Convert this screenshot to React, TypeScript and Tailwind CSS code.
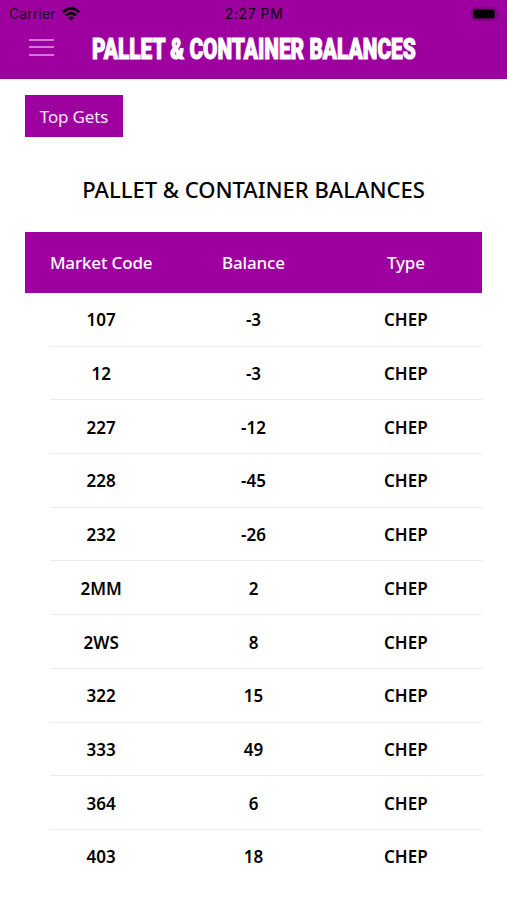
const rows: [string, string, string][] = [
  ["107", "-3", "CHEP"],
  ["12", "-3", "CHEP"],
  ["227", "-12", "CHEP"],
  ["228", "-45", "CHEP"],
  ["232", "-26", "CHEP"],
  ["2MM", "2", "CHEP"],
  ["2WS", "8", "CHEP"],
  ["322", "15", "CHEP"],
  ["333", "49", "CHEP"],
  ["364", "6", "CHEP"],
  ["403", "18", "CHEP"],
];

function WifiIcon() {
  return (
    <svg className="h-[14px] w-[18px]" viewBox="0 0 18 14" fill="none" stroke="#000" strokeWidth="2.6">
      <path d="M1 5.2Q9-2.3 17 5.2" />
      <path d="M4.1 8.4Q9 3.9 13.9 8.4" />
      <path d="M9 13.6 6.1 10.7Q9 8.2 11.9 10.7Z" fill="#000" stroke="none" />
    </svg>
  );
}

function BatteryIcon() {
  return (
    <svg className="h-[14px] w-[30px]" viewBox="0 0 30 14" fill="none">
      <rect x="0.9" y="1" width="24.4" height="12" rx="3.6" stroke="#000" strokeOpacity="0.35" />
      <rect x="2.4" y="2.5" width="21.4" height="9" rx="2.2" fill="#000" />
      <path d="M27 5q2 2 0 4Z" fill="#000" fillOpacity="0.4" />
    </svg>
  );
}

export default function App() {
  return (
    <div className="h-[900px] w-[507px] overflow-hidden bg-white font-['Noto_Sans',sans-serif] text-black">
      <header className="h-[79px] bg-[#9e00a0]">
        <div className="grid h-[27px] grid-cols-3 items-center pr-[6px] pl-[9px] font-[Inter,sans-serif] text-[14px] text-black/85">
          <div className="flex items-center gap-[6px]">
            <span className="tracking-[0.1px]">Carrier</span>
            <WifiIcon />
          </div>
          <span className="pr-[2px] text-center font-medium tracking-[0.5px]">2:27 PM</span>
          <div className="flex justify-end">
            <BatteryIcon />
          </div>
        </div>
        <div className="flex h-[42px] items-center pl-[29px]">
          <div className="mb-[2px] flex w-[63px] shrink-0 flex-col gap-[5.5px]">
            <span className="h-[2px] w-[25px] bg-[#d673d8]" />
            <span className="h-[2px] w-[25px] bg-[#d673d8]" />
            <span className="h-[2px] w-[25px] bg-[#d673d8]" />
          </div>
          <h1 className="mt-[2px] origin-left scale-x-[0.719] font-[Roboto,sans-serif] text-[29px] leading-none font-black whitespace-nowrap text-white [-webkit-text-stroke:1.1px_white]">
            PALLET &amp; CONTAINER BALANCES
          </h1>
        </div>
      </header>
      <main className="px-[25px] pt-4">
        <button className="flex h-[42px] w-[98px] items-center justify-center bg-[#9e00a0] pt-px text-[17px] tracking-[-0.15px] text-white/90">
          Top Gets
        </button>
        <h2 className="mt-[36px] text-center text-[22px] leading-8 font-medium whitespace-nowrap">
          PALLET &amp; CONTAINER BALANCES
        </h2>
        <section className="mt-[27px] text-center text-[17px] font-semibold">
          <div className="grid h-[61px] w-[457px] grid-cols-3 items-center bg-[#9e00a0] font-medium tracking-[-0.15px] text-white">
            <span>Market Code</span>
            <span>Balance</span>
            <span>Type</span>
          </div>
          {rows.map(([code, balance, type]) => (
            <div key={code} className="ml-[25px] h-[53.7px] border-b border-[#ececec] last:border-transparent">
              <div className="-ml-[25px] grid h-full grid-cols-3 items-center pt-[1.6px]">
                <span>{code}</span>
                <span>{balance}</span>
                <span>{type}</span>
              </div>
            </div>
          ))}
        </section>
      </main>
    </div>
  );
}
